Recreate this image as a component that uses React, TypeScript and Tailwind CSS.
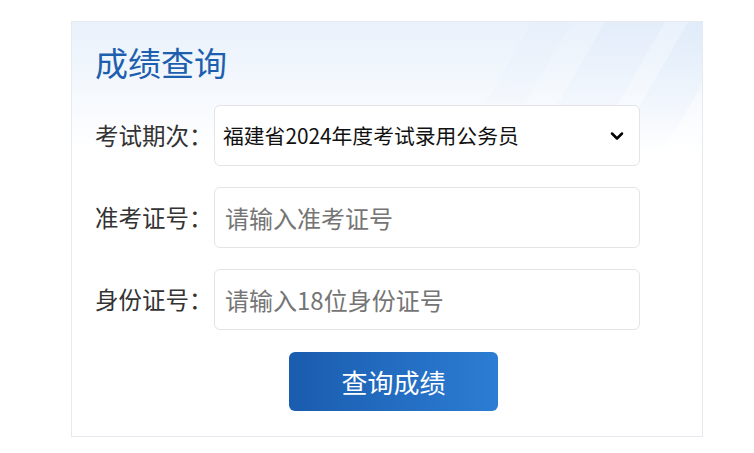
import { ChevronDown } from "lucide-react";

const font = { fontFamily: '"Noto Sans CJK SC", "Noto Sans", sans-serif' };

type FieldRowProps = {
  label: string;
  children: React.ReactNode;
};

function FieldRow({ label, children }: FieldRowProps) {
  return (
    <div className="flex items-center">
      <span className="w-[119px] shrink-0 text-[23.5px] text-[#333]">{label}</span>
      <div className="flex h-[61px] w-[426px] items-center rounded-[6px] border border-[#e4e4e4] bg-white">
        {children}
      </div>
    </div>
  );
}

export default function App() {
  return (
    <div className="min-h-screen bg-white pl-[71px] pt-[21px]" style={font}>
      <div className="relative w-[632px] overflow-hidden border border-[#e6e9ee] bg-white">
        {/* top light-blue wash with diagonal streaks */}
        <div className="pointer-events-none absolute inset-x-0 top-0 h-[130px] bg-gradient-to-b from-[#e9f1fb] to-white" />
        <div className="pointer-events-none absolute right-[60px] top-[-40px] h-[160px] w-[60px] -skew-x-[30deg] bg-gradient-to-b from-[#dce9f9] to-transparent opacity-60" />
        <div className="pointer-events-none absolute right-[-10px] top-[-40px] h-[170px] w-[50px] -skew-x-[30deg] bg-gradient-to-b from-[#d6e6f8] to-transparent opacity-60" />
        <div className="pointer-events-none absolute right-[150px] top-[-40px] h-[150px] w-[40px] -skew-x-[30deg] bg-gradient-to-b from-[#e2edfa] to-transparent opacity-50" />

        <div className="relative flex flex-col px-[23px] pb-[25px] pt-[20px]">
          <h1 className="text-[33px] leading-[40px] text-[#1d5fae]">成绩查询</h1>

          <div className="mt-[23px] flex flex-col gap-[21px]">
            <FieldRow label="考试期次：">
              <span className="flex-1 pl-[8px] text-[20.8px] text-[#111]">福建省2024年度考试录用公务员</span>
              <ChevronDown className="mr-[12px] h-[20px] w-[20px] text-black" strokeWidth={3} />
            </FieldRow>
            <FieldRow label="准考证号：">
              <input
                className="h-full w-full bg-transparent pl-[10px] text-[24px] text-[#333] outline-none placeholder:text-[#757575]"
                placeholder="请输入准考证号"
              />
            </FieldRow>
            <FieldRow label="身份证号：">
              <input
                className="h-full w-full bg-transparent pl-[10px] text-[24px] text-[#333] outline-none placeholder:text-[#757575]"
                placeholder="请输入18位身份证号"
              />
            </FieldRow>
          </div>

          <button className="ml-[194px] mt-[22px] h-[59px] w-[209px] rounded-[6px] bg-gradient-to-r from-[#1a5cae] to-[#2c7dd4] text-[26px] text-white">
            查询成绩
          </button>
        </div>
      </div>
    </div>
  );
}
